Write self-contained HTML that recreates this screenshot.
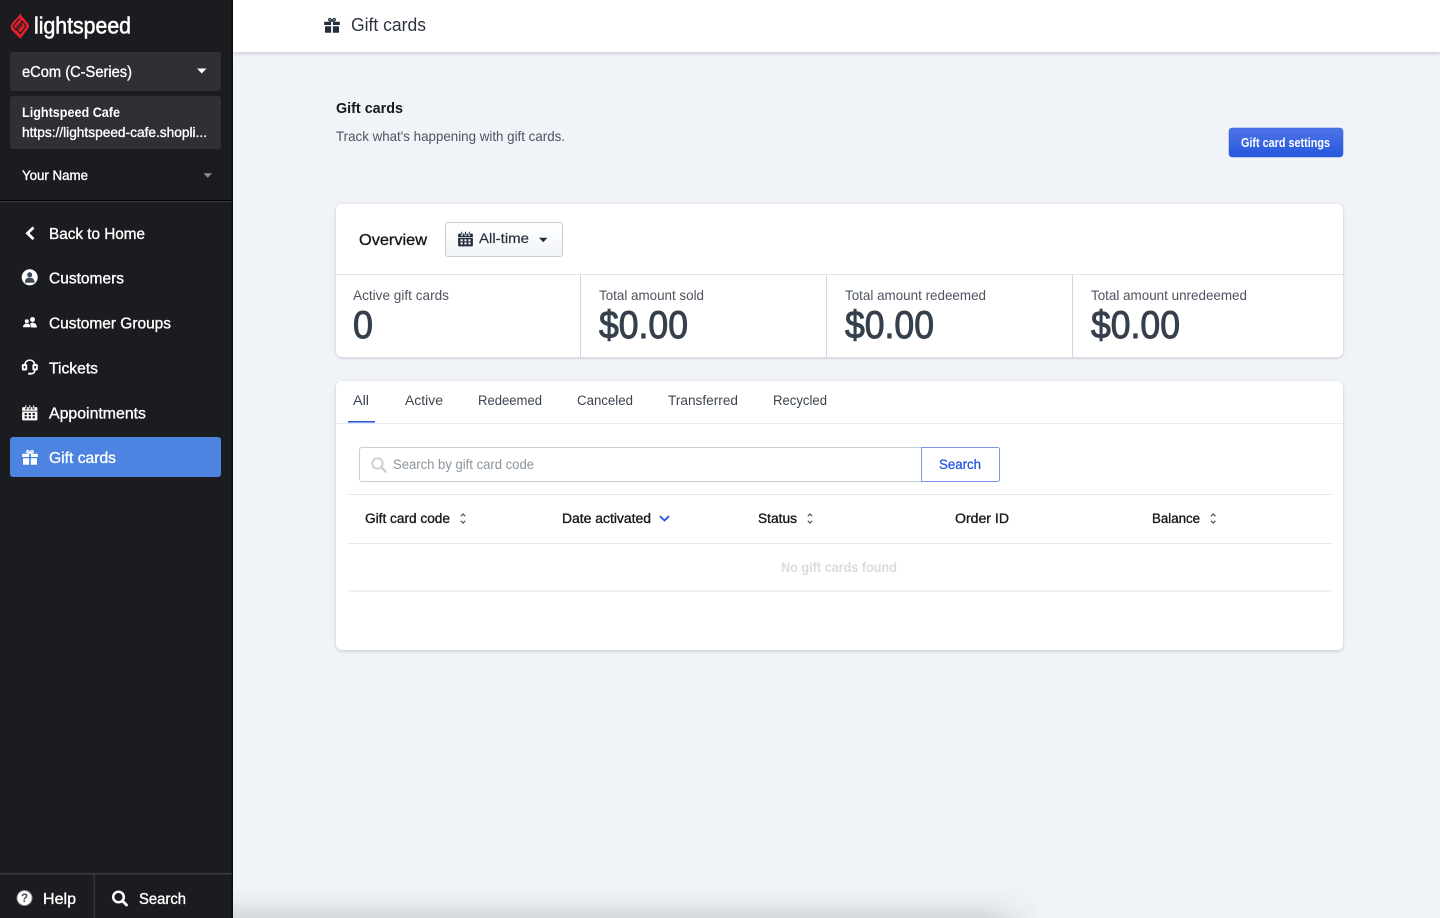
<!DOCTYPE html>
<html lang="en"><head><meta charset="utf-8"><title>Gift cards</title>
<style>
html,body{margin:0;padding:0;width:1440px;height:918px;background:#f0f3f7;overflow:hidden}
svg{display:block}
text{font-family:"Liberation Sans",Arial,sans-serif}
.w{fill:#fff;stroke:#fff;stroke-width:.35}
.h{fill:#15191e;stroke:#15191e;stroke-width:.35}
.l{fill:#4c5560}
.t{fill:#3c4550;font-size:13.5px}
.v{fill:#36404d;stroke:#36404d;stroke-width:1;font-size:39px}
</style></head><body>
<svg width="1440" height="918" viewBox="0 0 1440 918" xmlns="http://www.w3.org/2000/svg">
<defs>
<filter id="s1" x="-5%" y="-20%" width="110%" height="140%"><feDropShadow dx="0" dy="1" stdDeviation="1.5" flood-color="#1a2530" flood-opacity=".2"/></filter>
<filter id="s2" x="-5%" y="-50%" width="110%" height="220%"><feDropShadow dx="0" dy="1" stdDeviation="2" flood-color="#1a2530" flood-opacity=".22"/></filter>
<linearGradient id="btn" x1="0" y1="0" x2="0" y2="1"><stop offset="0" stop-color="#4f74e8"/><stop offset="1" stop-color="#2558dc"/></linearGradient>
<linearGradient id="dd" x1="0" y1="0" x2="0" y2="1"><stop offset="0" stop-color="#fff"/><stop offset="1" stop-color="#f1f4f8"/></linearGradient>
<linearGradient id="shade" x1="0" y1="0" x2="0" y2="1"><stop offset="0" stop-color="#d5d8db" stop-opacity="0"/><stop offset=".5" stop-color="#d5d8db" stop-opacity=".28"/><stop offset=".8" stop-color="#d5d8db" stop-opacity=".7"/><stop offset="1" stop-color="#d5d8db"/></linearGradient>
<linearGradient id="fade" gradientUnits="userSpaceOnUse" x1="985" y1="0" x2="1040" y2="0"><stop offset="0" stop-color="#fff"/><stop offset="1" stop-color="#000"/></linearGradient>
<mask id="m1" maskUnits="userSpaceOnUse" x="233" y="880" width="830" height="38"><rect x="233" y="880" width="830" height="38" fill="url(#fade)"/></mask>
<symbol id="gift" viewBox="0 0 16 16">
<path fill="none" stroke="currentColor" stroke-width="1.3" d="M7.6 3.6C6.5 3.7 4.7 3.4 4.6 2.2 4.6 1 6 .7 6.8 1.4 7.4 2 7.6 2.8 7.6 3.6ZM8.4 3.6C9.5 3.7 11.3 3.4 11.4 2.2 11.4 1 10 .7 9.2 1.4 8.6 2 8.4 2.8 8.4 3.6Z"/>
<path fill="currentColor" d="M.2 4.3h6.9v3.2H.2zM8.9 4.3h6.9v3.2H8.9zM1 8.8h6.1v6.4H1.6a.6.6 0 0 1-.6-.6zM8.9 8.8H15v5.8a.6.6 0 0 1-.6.6H8.9z"/>
</symbol>
<symbol id="cal" viewBox="0 0 16 16">
<path fill="currentColor" d="M1.6 2.6h1.8V4a1 1 0 0 0 2 0V2.6h1.6V4a1 1 0 0 0 2 0V2.6h1.6V4a1 1 0 0 0 2 0V2.6h1.8a1 1 0 0 1 1 1V6H.6V3.6a1 1 0 0 1 1-1ZM.6 6.8h14.8v7.6a1 1 0 0 1-1 1H1.6a1 1 0 0 1-1-1Z"/>
<path fill="currentColor" d="M3.7.7h1v3h-1zM7.5.7h1v3h-1zM11.3.7h1v3h-1z"/>
<g fill="var(--c)"><rect x="3" y="8.3" width="2.2" height="2"/><rect x="6.9" y="8.3" width="2.2" height="2"/><rect x="10.8" y="8.3" width="2.2" height="2"/><rect x="3" y="11.4" width="2.2" height="2"/><rect x="6.9" y="11.4" width="2.2" height="2"/><rect x="10.8" y="11.4" width="2.2" height="2"/></g>
</symbol>
</defs>

<rect width="1440" height="918" fill="#f0f3f7"/>

<!-- bottom shade -->
<rect x="233" y="886" width="830" height="32" fill="url(#shade)" mask="url(#m1)"/>

<!-- top bar -->
<rect x="233" y="0" width="1207" height="52" fill="#fff" filter="url(#s2)"/>
<use href="#gift" x="324" y="17.500" width="16" height="16" style="color:#232d3b"/>
<text x="351" y="31" font-size="18" fill="#2d3540" textLength="75" lengthAdjust="spacingAndGlyphs">Gift cards</text>

<!-- sidebar -->
<rect x="0" y="0" width="232" height="918" fill="#1a1c20"/>
<rect x="231.500" y="0" width="1.500" height="918" fill="#0c0d0f"/>
<!-- logo -->
<path fill="#e3202a" d="M20.300 12.500C20.800 15.300 22.600 17.300 25.800 20.700 27.800 22.800 29 24.300 29 25.900 29 27.300 28.300 28.500 27.300 29.800L20.300 38.800 13.200 31.600C11.600 30 10.700 28.500 10.700 26.700 10.700 24.600 12.200 22.900 14.200 20.700 16.900 17.700 19.800 15.500 20.300 12.500Z"/>
<g fill="none" stroke="#1a1c20" stroke-width="1.200">
<path d="M19.800 18.500 14.800 24C13.500 25.500 13.500 27 14.600 28.200L16.700 30.400C16.300 28.900 16.700 27.700 17.600 26.700L22.200 21.800"/>
<path d="M21.200 20.400 24.600 24C25.800 25.300 25.900 26.300 25 27.500L20.300 33.700 18.600 31.900C17.800 30.700 17.900 29.500 18.700 28.500L22.300 24.300"/>
</g>
<text x="34" y="33.500" font-size="23" fill="#fff" stroke="#fff" stroke-width=".55" textLength="97" lengthAdjust="spacingAndGlyphs">lightspeed</text>

<rect x="10" y="52" width="211" height="39" rx="3" fill="#2e3036"/>
<text x="22" y="77" font-size="16" class="w" textLength="110" lengthAdjust="spacingAndGlyphs">eCom (C-Series)</text>
<path d="M197 68.500h9.500l-4.750 5z" fill="#fff"/>
<rect x="10" y="96" width="211" height="53" rx="3" fill="#2e3036"/>
<text x="22" y="117" font-size="14" font-weight="700" fill="#fff" textLength="98" lengthAdjust="spacingAndGlyphs">Lightspeed Cafe</text>
<text x="22" y="137" font-size="14" class="w" textLength="185" lengthAdjust="spacingAndGlyphs">https://lightspeed-cafe.shopli...</text>
<text x="22" y="180" font-size="14" class="w" textLength="66" lengthAdjust="spacingAndGlyphs">Your Name</text>
<path d="M203.500 173.300h8.500l-4.250 4.500z" fill="#8c8e92"/>
<rect x="0" y="200" width="232" height="1" fill="#000"/><rect x="0" y="201" width="232" height="1" fill="#3a3c41"/>

<!-- nav -->
<path d="M33.500 227.500 27.500 233.300l6 5.800" fill="none" stroke="#fff" stroke-width="2.800"/>
<text x="49" y="239" font-size="16" class="w" textLength="96" lengthAdjust="spacingAndGlyphs">Back to Home</text>

<circle cx="29.700" cy="277.300" r="8" fill="#fff"/>
<circle cx="29.700" cy="274.800" r="2.500" fill="#3f4857"/>
<path d="M24.900 282.800c0-3.800 2-5.200 4.800-5.200s4.800 1.400 4.800 5.200z" fill="#3f4857"/>
<text x="49" y="283.500" font-size="16" class="w" textLength="75" lengthAdjust="spacingAndGlyphs">Customers</text>

<circle cx="32.500" cy="319.500" r="2.500" fill="#fff"/>
<path d="M29 327.500c0-3 1.200-4.900 3.500-4.900s4.400 1.900 4.400 4.900z" fill="#fff"/>
<circle cx="26.800" cy="321.300" r="2.300" fill="#fff" stroke="#1a1c20" stroke-width=".6"/>
<path d="M22.700 327.500c0-2.700 1.600-4.300 4.100-4.300s4.100 1.600 4.100 4.300z" fill="#fff" stroke="#1a1c20" stroke-width=".6"/>
<text x="49" y="328.500" font-size="16" class="w" textLength="122" lengthAdjust="spacingAndGlyphs">Customer Groups</text>

<path d="M24.800 365.500c0-7.200 10-7.200 10 0M34.800 370c0 2.700-1.800 3.800-4.200 3.800" fill="none" stroke="#fff" stroke-width="1.500"/>
<rect x="21.800" y="364" width="5.400" height="6.500" rx="1.500" fill="#fff"/><rect x="32.400" y="364" width="5.400" height="6.500" rx="1.500" fill="#fff"/>
<rect x="23.700" y="366" width="1.600" height="2.500" fill="#1a1c20"/><rect x="34.300" y="366" width="1.600" height="2.500" fill="#1a1c20"/>
<rect x="28" y="372.600" width="3.800" height="2.200" rx="1" fill="#fff"/>
<text x="49" y="373.500" font-size="16" class="w" textLength="49" lengthAdjust="spacingAndGlyphs">Tickets</text>

<use href="#cal" x="21.500" y="404.500" width="16.500" height="16.500" style="color:#fff;--c:#1a1c20"/>
<text x="49" y="418.500" font-size="16" class="w" textLength="97" lengthAdjust="spacingAndGlyphs">Appointments</text>

<rect x="10" y="437" width="211" height="40" rx="3" fill="#4d84e2"/>
<use href="#gift" x="22" y="449.500" width="16" height="16" style="color:#fff"/>
<text x="49" y="463" font-size="16" class="w" textLength="67" lengthAdjust="spacingAndGlyphs">Gift cards</text>

<!-- sidebar footer -->
<rect x="0" y="873" width="232" height="1.500" fill="#3a3c41"/>
<rect x="93.500" y="874" width="1.500" height="44" fill="#33353a"/>
<circle cx="24.500" cy="898" r="7.500" fill="#fff" stroke="#8f9196" stroke-width="1"/>
<text x="24.500" y="902" font-size="11.500" font-weight="700" fill="#3f4652" text-anchor="middle">?</text>
<text x="43" y="904" font-size="16" class="w" textLength="33" lengthAdjust="spacingAndGlyphs">Help</text>
<circle cx="118.500" cy="897" r="5.300" fill="none" stroke="#fff" stroke-width="2.500"/>
<path d="M122.500 901l4 4" stroke="#fff" stroke-width="2.800" stroke-linecap="round"/>
<text x="139" y="904" font-size="16" class="w" textLength="47" lengthAdjust="spacingAndGlyphs">Search</text>

<!-- heading -->
<text x="336" y="113" font-size="15" font-weight="700" fill="#15191e" textLength="67" lengthAdjust="spacingAndGlyphs">Gift cards</text>
<text x="336" y="141" font-size="14" class="l" textLength="229" lengthAdjust="spacingAndGlyphs">Track what's happening with gift cards.</text>
<rect x="1229" y="128" width="114" height="29" rx="3" fill="url(#btn)" stroke="#2a5bdc" stroke-width=".5"/>
<text x="1241" y="147" font-size="12.500" font-weight="700" fill="#fff" textLength="89" lengthAdjust="spacingAndGlyphs">Gift card settings</text>

<!-- overview card -->
<rect x="336" y="204" width="1007" height="153" rx="6" fill="#fff" filter="url(#s1)"/>
<text x="359" y="245" font-size="16" class="h" textLength="68" lengthAdjust="spacingAndGlyphs">Overview</text>
<rect x="445.500" y="222.500" width="117" height="34" rx="2.500" fill="url(#dd)" stroke="#c8ced6"/>
<use href="#cal" x="457.500" y="231" width="16" height="16" style="color:#232d3b;--c:#f8f9fb"/>
<text x="479" y="243" font-size="14" fill="#232d3b" stroke="#232d3b" stroke-width=".15" textLength="50" lengthAdjust="spacingAndGlyphs">All-time</text>
<path d="M539 237.800h8.500l-4.250 4.400z" fill="#232d3b"/>
<rect x="336" y="274" width="1007" height="1" fill="#dfe3e8"/>
<rect x="580" y="275" width="1" height="82" fill="#d3d8de"/>
<rect x="826" y="275" width="1" height="82" fill="#d3d8de"/>
<rect x="1072" y="275" width="1" height="82" fill="#d3d8de"/>
<text x="353" y="300" font-size="14" class="l" textLength="96" lengthAdjust="spacingAndGlyphs">Active gift cards</text>
<text x="599" y="300" font-size="14" class="l" textLength="105" lengthAdjust="spacingAndGlyphs">Total amount sold</text>
<text x="845" y="300" font-size="14" class="l" textLength="141" lengthAdjust="spacingAndGlyphs">Total amount redeemed</text>
<text x="1091" y="300" font-size="14" class="l" textLength="156" lengthAdjust="spacingAndGlyphs">Total amount unredeemed</text>
<text x="353" y="338" class="v" textLength="20" lengthAdjust="spacingAndGlyphs">0</text>
<text x="599" y="338" class="v" textLength="89" lengthAdjust="spacingAndGlyphs">$0.00</text>
<text x="845" y="338" class="v" textLength="89" lengthAdjust="spacingAndGlyphs">$0.00</text>
<text x="1091" y="338" class="v" textLength="89" lengthAdjust="spacingAndGlyphs">$0.00</text>

<!-- table card -->
<rect x="336" y="381" width="1007" height="269" rx="6" fill="#fff" filter="url(#s1)"/>
<text x="353" y="405" class="t" textLength="16" lengthAdjust="spacingAndGlyphs">All</text>
<text x="405" y="405" class="t" textLength="38" lengthAdjust="spacingAndGlyphs">Active</text>
<text x="478" y="405" class="t" textLength="64" lengthAdjust="spacingAndGlyphs">Redeemed</text>
<text x="577" y="405" class="t" textLength="56" lengthAdjust="spacingAndGlyphs">Canceled</text>
<text x="668" y="405" class="t" textLength="70" lengthAdjust="spacingAndGlyphs">Transferred</text>
<text x="773" y="405" class="t" textLength="54" lengthAdjust="spacingAndGlyphs">Recycled</text>
<rect x="336" y="423" width="1007" height="1" fill="#e8ebef"/>
<rect x="348" y="421" width="27" height="1.600" fill="#2a5bdc"/>

<path d="M921 447.500H362a2.500 2.500 0 0 0-2.500 2.500v29a2.500 2.500 0 0 0 2.500 2.500h559" fill="#fff" stroke="#c8ced6"/>
<circle cx="377.500" cy="463.500" r="5.200" fill="none" stroke="#ccd1d7" stroke-width="2"/>
<path d="M381.500 467.500l4 4" stroke="#ccd1d7" stroke-width="2.400" stroke-linecap="round"/>
<text x="393" y="469" font-size="13.500" fill="#8b949e" textLength="141" lengthAdjust="spacingAndGlyphs">Search by gift card code</text>
<path d="M921.500 447.500h76a2 2 0 0 1 2 2v30a2 2 0 0 1-2 2h-76z" fill="#fff" stroke="#7b95ec"/>
<text x="939" y="469" font-size="13.500" fill="#1f55e0" stroke="#1f55e0" stroke-width=".25" textLength="42" lengthAdjust="spacingAndGlyphs">Search</text>

<rect x="348" y="494" width="984" height="1" fill="#e6e8ec"/>
<rect x="348" y="543" width="984" height="1" fill="#e6e8ec"/>
<rect x="348" y="590.500" width="984" height="1.200" fill="#e8eaee"/>

<text x="365" y="523" font-size="13.500" class="h" textLength="85" lengthAdjust="spacingAndGlyphs">Gift card code</text>
<text x="562" y="523" font-size="13.500" class="h" textLength="89" lengthAdjust="spacingAndGlyphs">Date activated</text>
<text x="758" y="523" font-size="13.500" class="h" textLength="39" lengthAdjust="spacingAndGlyphs">Status</text>
<text x="955" y="523" font-size="13.500" class="h" textLength="54" lengthAdjust="spacingAndGlyphs">Order ID</text>
<text x="1152" y="523" font-size="13.500" class="h" textLength="48" lengthAdjust="spacingAndGlyphs">Balance</text>
<g fill="none" stroke="#3c4550" stroke-width="1.100">
<path d="M460.800 516.300l2.200-2.400 2.200 2.400M460.800 520.700l2.200 2.400 2.200-2.400"/>
<path d="M807.800 516.300l2.200-2.400 2.200 2.400M807.800 520.700l2.200 2.400 2.200-2.400"/>
<path d="M1211 516.300l2.200-2.400 2.200 2.400M1211 520.700l2.200 2.400 2.200-2.400"/>
</g>
<path d="M660 516.200l4.500 4.300 4.500-4.300" fill="none" stroke="#1f55e0" stroke-width="1.800"/>
<text x="781" y="572" font-size="13.500" font-weight="700" fill="#d8dce1" textLength="116" lengthAdjust="spacingAndGlyphs">No gift cards found</text>
</svg>
</body></html>
